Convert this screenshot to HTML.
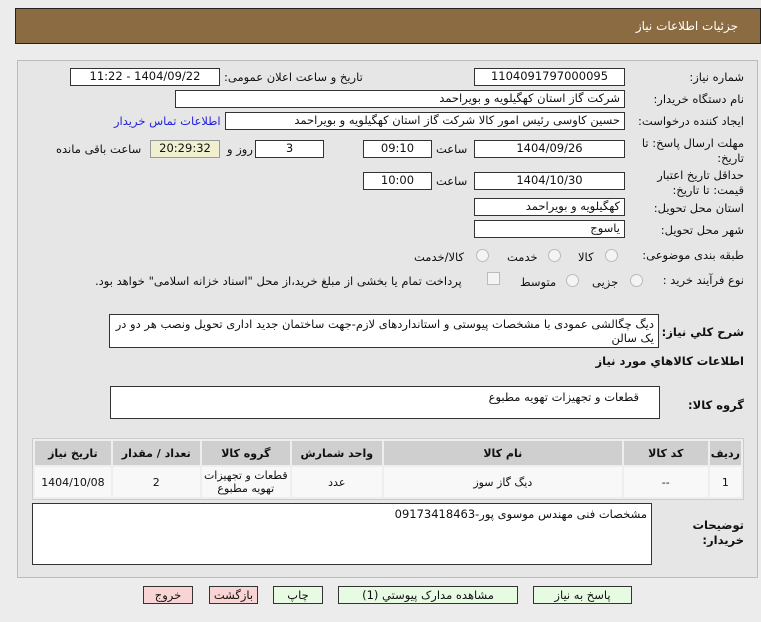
<!DOCTYPE html>
<html><head><meta charset="utf-8"><style>
body{margin:0;width:761px;height:622px;background:#ececec;font-family:"DejaVu Sans","Liberation Sans",sans-serif;font-size:11.5px;color:#111;position:relative;overflow:hidden}
.a{position:absolute}
.hdr{left:15px;top:8px;width:744px;height:34px;background:#8b6b42;border:1px solid #222}
.hdr span{position:absolute;right:22px;top:10px;color:#fff;font-size:12px}
.panel{left:17px;top:60px;width:739px;height:516px;border:1px solid #bbb;background:#e6e6e6}
.box{position:absolute;background:#fff;border:1px solid #333;box-sizing:border-box;direction:rtl;padding:0 4px;line-height:15px;white-space:nowrap;overflow:hidden}
.c{text-align:center;padding:0}
.l{position:absolute;direction:rtl;white-space:nowrap}
.w{white-space:normal}
.r{right:17px}
.rad{position:absolute;width:11px;height:11px;border-radius:50%;border:1px solid #bbb;background:#f4f4f4}
table{position:absolute;left:32px;top:438px;width:712px;border-collapse:separate;border-spacing:2px;background:#eee;border:1px solid #ccc;direction:rtl}
th{background:#cfcfcf;height:22px;font-size:11px}
td{background:#f8f8f8;height:28px;text-align:center;font-size:11px;line-height:13px}
.btn{position:absolute;top:586px;height:18px;border:1px solid #333;box-sizing:border-box;text-align:center;line-height:16px;font-size:11.5px}
.g{background:#e6fbe2}.p{background:#f9d4d4}
</style></head><body>
<div class="a hdr"><span>جزئیات اطلاعات نیاز</span></div>
<div class="a panel"></div>
<div class="l r" style="top:70px">شماره نیاز:</div>
<div class="box c" style="left:474px;top:68px;width:151px;height:18px">1104091797000095</div>
<div class="l" style="left:224px;top:70px">تاریخ و ساعت اعلان عمومی:</div>
<div class="box c" style="left:70px;top:68px;width:150px;height:18px">1404/09/22 - 11:22</div>
<div class="l r" style="top:92px">نام دستگاه خریدار:</div>
<div class="box" style="left:175px;top:90px;width:450px;height:18px">شرکت گاز استان کهگیلویه و بویراحمد</div>
<div class="l r" style="top:114px">ایجاد کننده درخواست:</div>
<div class="box" style="left:225px;top:112px;width:400px;height:18px">حسین کاوسی رئیس امور کالا شرکت گاز استان کهگیلویه و بویراحمد</div>
<div class="l" style="left:114px;top:114px;color:#2222dd">اطلاعات تماس خریدار</div>
<div class="l r w" style="top:136px;line-height:15px;width:112px;text-align:right">مهلت ارسال پاسخ: تا تاریخ:</div>
<div class="box c" style="left:474px;top:140px;width:151px;height:18px">1404/09/26</div>
<div class="l" style="left:436px;top:142px">ساعت</div>
<div class="box c" style="left:363px;top:140px;width:69px;height:18px">09:10</div>
<div class="box c" style="left:255px;top:140px;width:69px;height:18px">3</div>
<div class="l" style="left:227px;top:142px">روز و</div>
<div class="box c" style="left:150px;top:140px;width:70px;height:18px;background:#f0efcf;border-color:#999">20:29:32</div>
<div class="l" style="left:56px;top:142px">ساعت باقی مانده</div>
<div class="l r w" style="top:168px;line-height:15px;width:100px;text-align:right">حداقل تاریخ اعتبار قیمت: تا تاریخ:</div>
<div class="box c" style="left:474px;top:172px;width:151px;height:18px">1404/10/30</div>
<div class="l" style="left:436px;top:174px">ساعت</div>
<div class="box c" style="left:363px;top:172px;width:69px;height:18px">10:00</div>
<div class="l r" style="top:201px">استان محل تحویل:</div>
<div class="box" style="left:474px;top:198px;width:151px;height:18px">کهگیلویه و بویراحمد</div>
<div class="l r" style="top:223px">شهر محل تحویل:</div>
<div class="box" style="left:474px;top:220px;width:151px;height:18px">یاسوج</div>
<div class="l r" style="top:248px">طبقه بندی موضوعی:</div>
<div class="rad" style="left:605px;top:249px"></div><div class="l" style="left:578px;top:250px">کالا</div>
<div class="rad" style="left:548px;top:249px"></div><div class="l" style="left:507px;top:250px">خدمت</div>
<div class="rad" style="left:476px;top:249px"></div><div class="l" style="left:414px;top:250px">کالا/خدمت</div>
<div class="l r" style="top:273px">نوع فرآیند خرید :</div>
<div class="rad" style="left:630px;top:274px"></div><div class="l" style="left:592px;top:275px">جزیی</div>
<div class="rad" style="left:566px;top:274px"></div><div class="l" style="left:520px;top:275px">متوسط</div>
<div class="a" style="left:487px;top:272px;width:11px;height:11px;border:1px solid #bbb;background:#f4f4f4"></div>
<div class="l" style="left:95px;top:274px">پرداخت تمام یا بخشی از مبلغ خرید،از محل "اسناد خزانه اسلامی" خواهد بود.</div>
<div class="l r" style="top:325px;font-weight:bold">شرح کلي نياز:</div>
<div class="box" style="left:109px;top:314px;width:550px;height:34px;white-space:normal;line-height:14px;padding-top:2px">دیگ چگالشی عمودی با مشخصات پیوستی و استانداردهای لازم-جهت ساختمان جدید اداری  تحویل ونصب هر دو در یک سالن</div>
<div class="l r" style="top:354px;font-weight:bold">اطلاعات کالاهاي مورد نياز</div>
<div class="l r" style="top:398px;font-weight:bold">گروه کالا:</div>
<div class="box" style="left:110px;top:386px;width:550px;height:33px;padding-right:20px;padding-top:3px">قطعات و تجهیزات تهویه مطبوع</div>
<table><tr><th style="width:28px">ردیف</th><th style="width:82px">کد کالا</th><th style="width:236px">نام کالا</th><th style="width:88px">واحد شمارش</th><th style="width:86px">گروه کالا</th><th style="width:85px">تعداد / مقدار</th><th>تاریخ نیاز</th></tr>
<tr><td>1</td><td>--</td><td>دیگ گاز سوز</td><td>عدد</td><td>قطعات و تجهیزات تهویه مطبوع</td><td>2</td><td>1404/10/08</td></tr></table>
<div class="l r w" style="top:518px;font-weight:bold;line-height:15px;width:70px;text-align:right">توضیحات خریدار:</div>
<div class="box" style="left:32px;top:503px;width:620px;height:62px;padding-top:3px">مشخصات فنی مهندس موسوی پور-09173418463</div>
<div class="btn p" style="left:143px;width:50px">خروج</div>
<div class="btn p" style="left:209px;width:49px">بازگشت</div>
<div class="btn g" style="left:273px;width:50px">چاپ</div>
<div class="btn g" style="left:338px;width:180px">مشاهده مدارک پیوستي (1)</div>
<div class="btn g" style="left:533px;width:99px">پاسخ به نیاز</div>
</body></html>
